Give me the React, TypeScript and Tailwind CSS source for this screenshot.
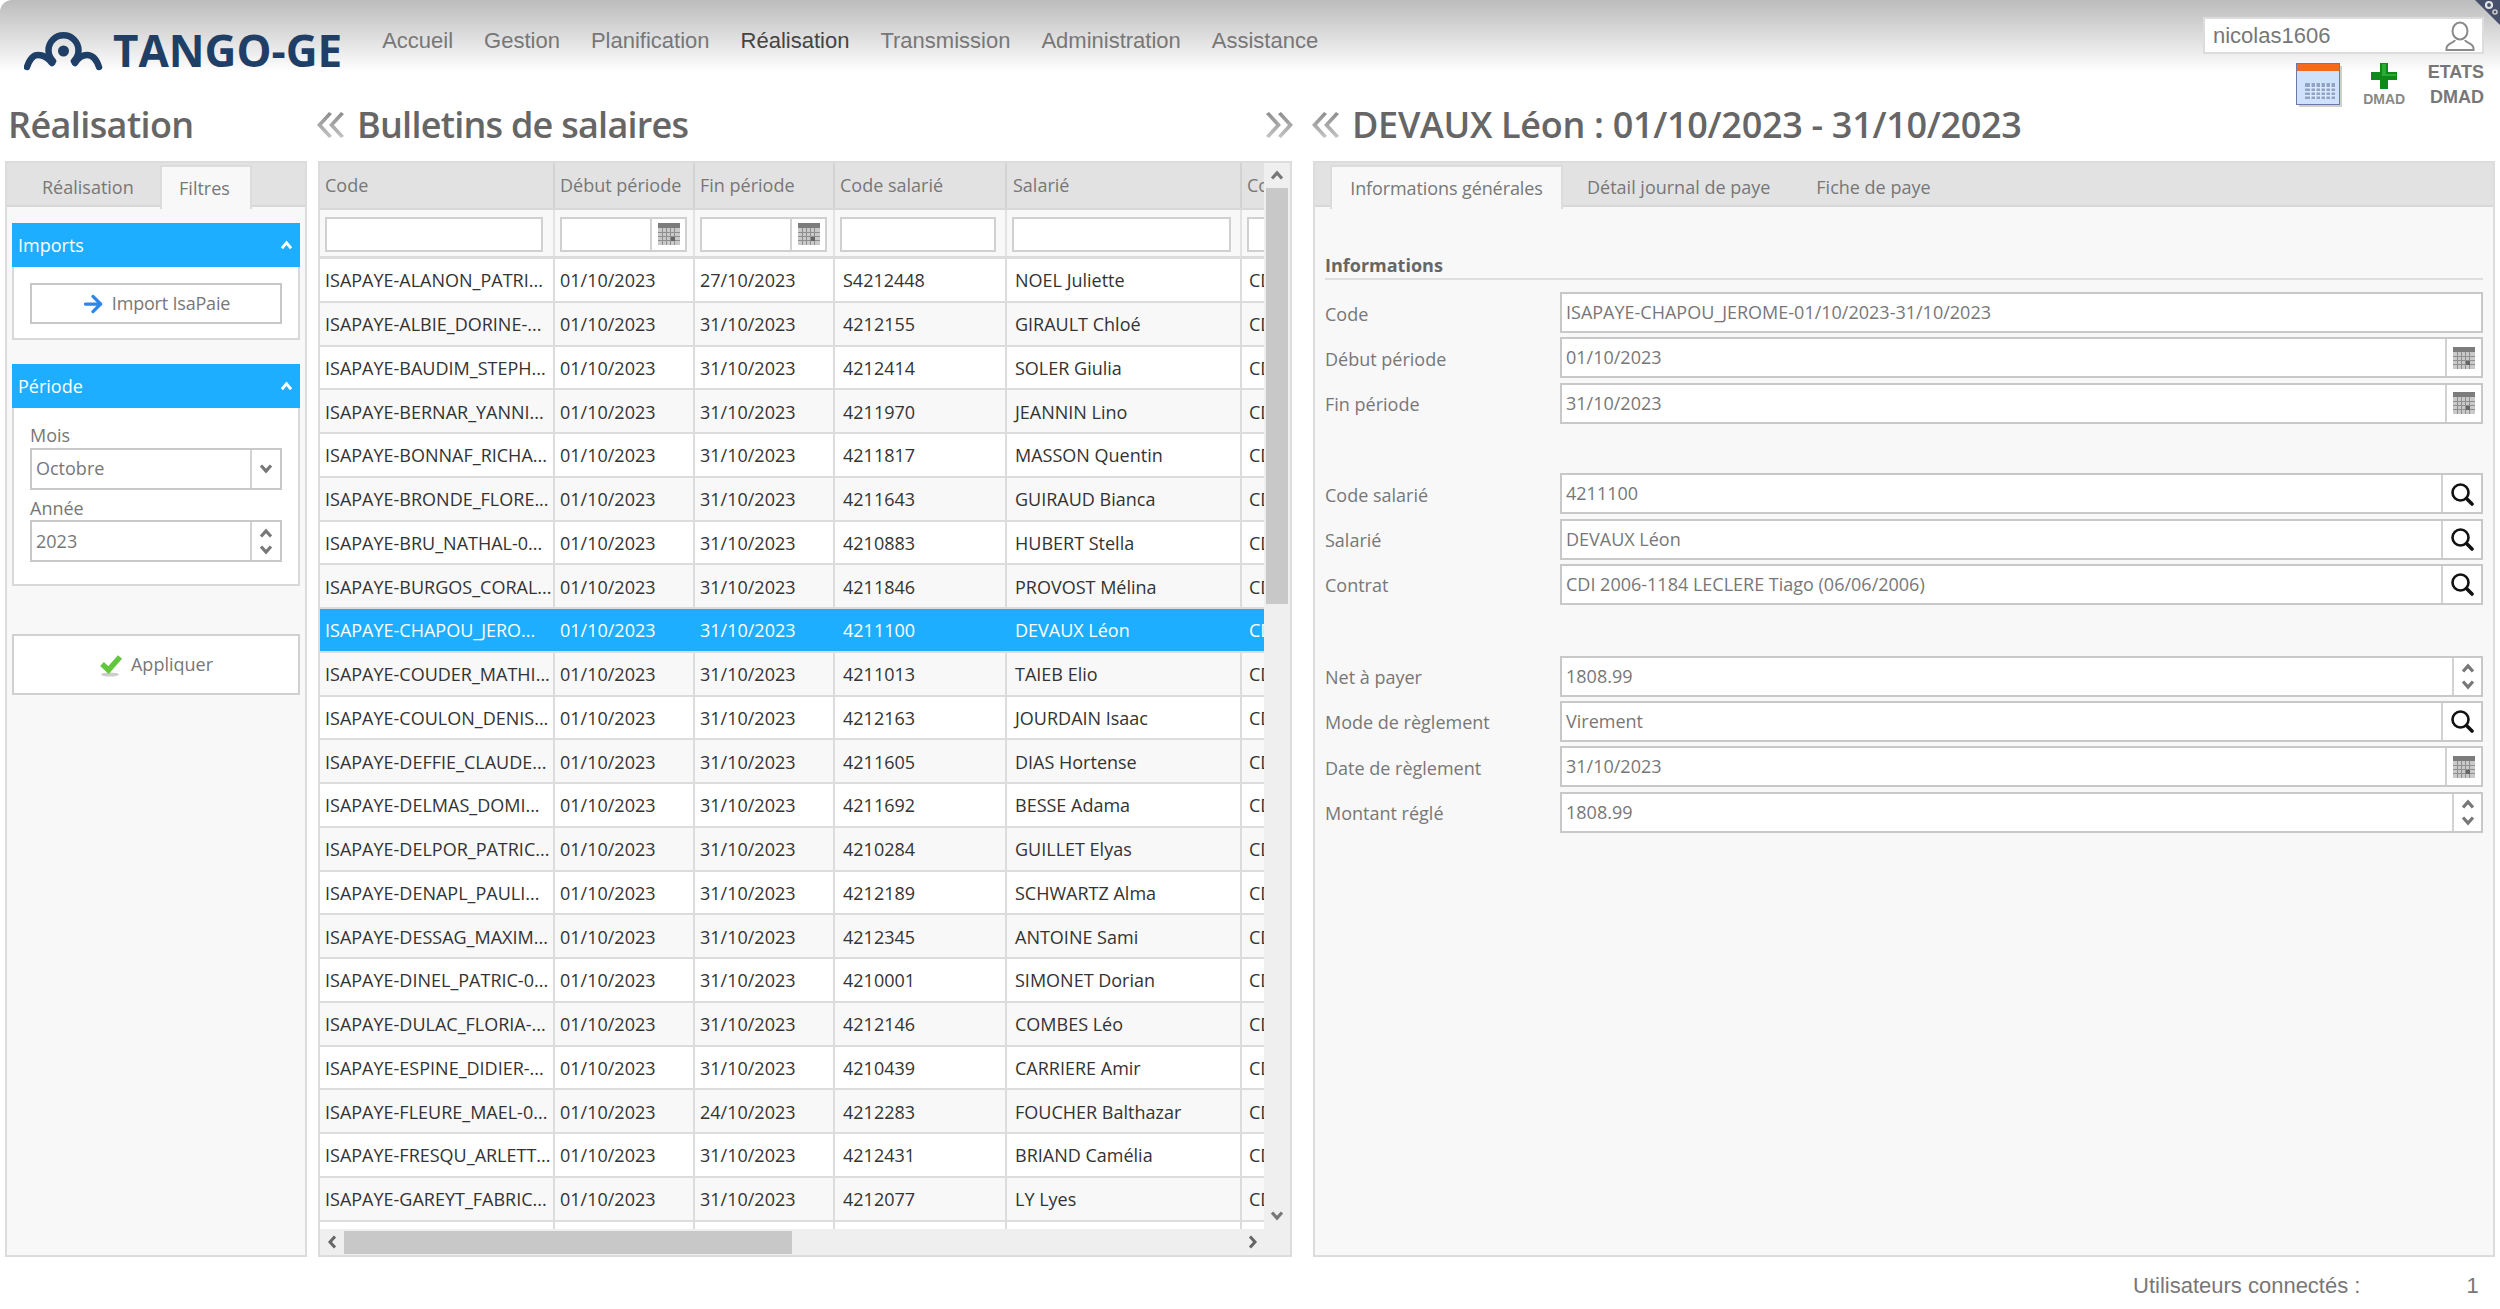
import { ArrowRight } from "lucide-react"

const rows = [
  ["ISAPAYE-ALANON_PATRI...", "01/10/2023", "27/10/2023", "S4212448", "NOEL Juliette"],
  ["ISAPAYE-ALBIE_DORINE-...", "01/10/2023", "31/10/2023", "4212155", "GIRAULT Chloé"],
  ["ISAPAYE-BAUDIM_STEPH...", "01/10/2023", "31/10/2023", "4212414", "SOLER Giulia"],
  ["ISAPAYE-BERNAR_YANNI...", "01/10/2023", "31/10/2023", "4211970", "JEANNIN Lino"],
  ["ISAPAYE-BONNAF_RICHA...", "01/10/2023", "31/10/2023", "4211817", "MASSON Quentin"],
  ["ISAPAYE-BRONDE_FLORE...", "01/10/2023", "31/10/2023", "4211643", "GUIRAUD Bianca"],
  ["ISAPAYE-BRU_NATHAL-0...", "01/10/2023", "31/10/2023", "4210883", "HUBERT Stella"],
  ["ISAPAYE-BURGOS_CORAL...", "01/10/2023", "31/10/2023", "4211846", "PROVOST Mélina"],
  ["ISAPAYE-CHAPOU_JERO...", "01/10/2023", "31/10/2023", "4211100", "DEVAUX Léon"],
  ["ISAPAYE-COUDER_MATHI...", "01/10/2023", "31/10/2023", "4211013", "TAIEB Elio"],
  ["ISAPAYE-COULON_DENIS...", "01/10/2023", "31/10/2023", "4212163", "JOURDAIN Isaac"],
  ["ISAPAYE-DEFFIE_CLAUDE...", "01/10/2023", "31/10/2023", "4211605", "DIAS Hortense"],
  ["ISAPAYE-DELMAS_DOMI...", "01/10/2023", "31/10/2023", "4211692", "BESSE Adama"],
  ["ISAPAYE-DELPOR_PATRIC...", "01/10/2023", "31/10/2023", "4210284", "GUILLET Elyas"],
  ["ISAPAYE-DENAPL_PAULI...", "01/10/2023", "31/10/2023", "4212189", "SCHWARTZ Alma"],
  ["ISAPAYE-DESSAG_MAXIM...", "01/10/2023", "31/10/2023", "4212345", "ANTOINE Sami"],
  ["ISAPAYE-DINEL_PATRIC-0...", "01/10/2023", "31/10/2023", "4210001", "SIMONET Dorian"],
  ["ISAPAYE-DULAC_FLORIA-...", "01/10/2023", "31/10/2023", "4212146", "COMBES Léo"],
  ["ISAPAYE-ESPINE_DIDIER-...", "01/10/2023", "31/10/2023", "4210439", "CARRIERE Amir"],
  ["ISAPAYE-FLEURE_MAEL-0...", "01/10/2023", "24/10/2023", "4212283", "FOUCHER Balthazar"],
  ["ISAPAYE-FRESQU_ARLETT...", "01/10/2023", "31/10/2023", "4212431", "BRIAND Camélia"],
  ["ISAPAYE-GAREYT_FABRIC...", "01/10/2023", "31/10/2023", "4212077", "LY Lyes"],
]

const navItems = ["Accueil", "Gestion", "Planification", "Réalisation", "Transmission", "Administration", "Assistance"]

function Chevron({ up, className }: { up?: boolean; className?: string }) {
  return (
    <svg viewBox="0 0 14 10" className={className ?? "w-[14px] h-[10px]"}>
      <path d={up ? "M2 8.5 L7 3 L12 8.5" : "M2 1.5 L7 7 L12 1.5"} fill="none" stroke="#777" strokeWidth="3.2" />
    </svg>
  )
}

function Chevrons({ right }: { right?: boolean }) {
  return (
    <svg viewBox="0 0 28 26" className="w-[28px] h-[26px] shrink-0">
      <defs>
        <linearGradient id={right ? "chev-r" : "chev-l"} x1="0" y1="0" x2="0" y2="1">
          <stop offset="0" stopColor="#8c8c8c" />
          <stop offset="1" stopColor="#c4c4c4" />
        </linearGradient>
      </defs>
      <g fill={`url(#${right ? "chev-r" : "chev-l"})`} transform={right ? "matrix(-1 0 0 1 28 0)" : undefined}>
        <path d="M12 0 L15 2 L5 13 L15 24 L12 26 L0 13 Z" />
        <path d="M24 0 L27 2 L17 13 L27 24 L24 26 L12 13 Z" />
      </g>
    </svg>
  )
}

function CalendarIcon() {
  return (
    <svg viewBox="0 0 22 22" className="w-[22px] h-[22px]">
      <rect x="0" y="0" width="22" height="22" fill="#c9c9c9" />
      <rect x="0" y="0" width="22" height="5" fill="#7c7c7c" />
      {[4, 8, 12, 16].map((x) => <rect key={x} x={x} y="5" width="1" height="17" fill="#8f8f8f" />)}
      {[9, 13, 17].map((y) => <rect key={y} x="0" y={y} width="22" height="1" fill="#8f8f8f" />)}
      <rect x="13" y="14" width="4" height="4" fill="#666" />
    </svg>
  )
}

function SearchIcon() {
  return (
    <svg viewBox="0 0 24 24" className="w-[24px] h-[24px]">
      <circle cx="10.5" cy="10.5" r="8" fill="none" stroke="#111" strokeWidth="2.6" />
      <path d="M16.5 16.5 L22 22" stroke="#111" strokeWidth="3.6" strokeLinecap="round" />
    </svg>
  )
}

function Spinner() {
  return (
    <div className="w-[29px] shrink-0 border-l-2 border-[#d2d2d2] flex flex-col items-center justify-center gap-[7px]">
      <Chevron up />
      <Chevron />
    </div>
  )
}

type Addon = "calendar" | "search" | "spinner" | undefined

function Field({ label, value, addon }: { label: string; value: string; addon?: Addon }) {
  return (
    <div className="flex h-[45.33px]">
      <div className="w-[235px] h-[41px] flex items-center pt-[3px] text-[18px] text-[#777]">{label}</div>
      <div className="flex-1 h-[41px] flex bg-white border-2 border-[#c8c8c8]">
        <div className="flex-1 flex items-center px-[4px] text-[18px] text-[#777]">{value}</div>
        {addon === "calendar" && (
          <div className="w-[36px] shrink-0 border-l-2 border-[#d2d2d2] flex items-center justify-center"><CalendarIcon /></div>
        )}
        {addon === "search" && (
          <div className="w-[40px] shrink-0 border-l-2 border-[#d2d2d2] flex items-center justify-center"><SearchIcon /></div>
        )}
        {addon === "spinner" && <Spinner />}
      </div>
    </div>
  )
}

function SectionHeader({ title }: { title: string }) {
  return (
    <div className="h-[44px] bg-[#1eaeff] flex items-center justify-between px-[6px] text-white text-[18px]">
      <span>{title}</span>
      <svg viewBox="0 0 14 12" className="w-[13px] h-[11px] mr-[1px]">
        <path d="M2 9 L7 3 L12 9" fill="none" stroke="#fff" strokeWidth="3" />
      </svg>
    </div>
  )
}

function DateFilter({ className }: { className: string }) {
  return (
    <div className={`${className} h-[35px] flex bg-white border-2 border-[#d0d0d0]`}>
      <div className="flex-1" />
      <div className="w-[35px] border-l-2 border-[#d2d2d2] flex items-center justify-center"><CalendarIcon /></div>
    </div>
  )
}

export default function App() {
  return (
    <div className="w-[2500px] h-[1309px] overflow-hidden bg-white font-['Open_Sans',sans-serif]">
      {/* top bar */}
      <header className="h-[72px] rounded-tl-[12px] bg-gradient-to-b from-[#bcbcbc] to-white flex items-start relative">
        <div className="ml-[24px] mt-[29px] flex items-start">
          <svg viewBox="0 0 82 44" className="w-[82px] h-[44px]">
            <g fill="none" stroke="#1f3f66" strokeLinecap="round" strokeWidth="6.5">
              <path d="M3 38 Q7 26 14 26 Q22 26 28 34" />
              <path d="M29 32 A15 15 0 1 1 50 32" />
              <path d="M51 34 Q56 26 63 26 Q71 26 75 38" />
            </g>
            <circle cx="39.5" cy="22" r="5.5" fill="#1f3f66" />
          </svg>
          <span className="ml-[7px] mt-[-4px] text-[44px] leading-[50px] font-bold text-[#1f3f66]">TANGO-GE</span>
        </div>
        <nav className="ml-[40px] mt-[28px] flex gap-[31px] font-['Liberation_Sans',sans-serif] text-[22px] leading-[26px] text-[#777]">
          {navItems.map((n) => (
            <span key={n} className={n === "Réalisation" ? "text-[#444]" : ""}>{n}</span>
          ))}
        </nav>
        <div className="ml-auto mr-[16px] mt-[17px] w-[281px] font-['Liberation_Sans',sans-serif]">
          <div className="h-[37px] bg-white border-2 border-[#dcdcdc] flex items-center justify-between pl-[8px] pr-[7px] text-[22px] text-[#777]">
            <span>nicolas1606</span>
            <svg viewBox="0 0 30 30" className="w-[30px] h-[30px]">
              <g fill="none" stroke="#8a8a8a" strokeWidth="2">
                <ellipse cx="15" cy="10" rx="7.5" ry="8.5" />
                <path d="M10 19 C9 22 2 22 1.5 27 L1.5 29 L28.5 29 L28.5 27 C28 22 21 22 20 19" />
              </g>
            </svg>
          </div>
          <div className="flex justify-end items-start mt-[9px]">
            <svg viewBox="0 0 46 44" className="w-[46px] h-[44px] mr-[20px]">
              <rect x="3" y="3" width="43" height="41" fill="#bbb" opacity="0.7" />
              <rect x="0.5" y="0.5" width="43" height="41" fill="#cfe2fb" stroke="#6c78a8" />
              <rect x="1" y="1" width="42" height="7" fill="#f26a1b" />
              <rect x="9" y="20" width="30" height="16" fill="#8fa3c4" />
              {[14, 19, 24, 29, 34].map((x) => <rect key={x} x={x} y="20" width="1.5" height="16" fill="#dce8fb" />)}
              {[24, 28, 32].map((y) => <rect key={y} x="9" y={y} width="30" height="1.5" fill="#dce8fb" />)}
            </svg>
            <div className="flex flex-col items-center w-[45px] mr-[21px]">
              <svg viewBox="0 0 26 26" className="w-[26px] h-[26px]">
                <path d="M9 0 H17 V9 H26 V17 H17 V26 H9 V17 H0 V9 H9 Z" fill="#0f8a1a" />
                <path d="M11 1 H15 V11 H25 V13 H11 Z" fill="#3cc24a" opacity="0.6" />
              </svg>
              <span className="text-[14px] leading-[14px] mt-[3px] font-bold text-[#888]">DMAD</span>
            </div>
            <div className="flex flex-col items-end text-[18px] leading-[25px] font-bold text-[#777] mt-[-3px]">
              <span>ETATS</span>
              <span>DMAD</span>
            </div>
          </div>
        </div>
        {/* settings corner */}
        <svg viewBox="0 0 25 25" className="absolute right-0 top-0 w-[25px] h-[25px]">
          <path d="M0 0 H25 V25 Z" fill="#46506a" />
          <circle cx="14" cy="5" r="3" fill="none" stroke="#e2e2e2" strokeWidth="2.2" />
          <circle cx="20" cy="12" r="2" fill="none" stroke="#c8c8c8" strokeWidth="1.6" />
        </svg>
      </header>

      {/* titles */}
      <div className="h-[89px] flex items-center pl-[8px] pt-[16px] text-[36px] font-semibold text-[#666]">
        <div className="w-[309px] tracking-[-0.6px]">Réalisation</div>
        <div className="w-[976px] mr-[19px] flex items-center">
          <Chevrons />
          <span className="ml-[12px] flex-1 tracking-[-0.75px]">Bulletins de salaires</span>
          <Chevrons right />
        </div>
        <Chevrons />
        <span className="ml-[12px] tracking-[-0.3px]">DEVAUX Léon : 01/10/2023 - 31/10/2023</span>
      </div>

      {/* main columns */}
      <main className="h-[1096px] flex pl-[5px] text-[18px] text-[#777]">
        {/* filters */}
        <section className="w-[302px] border-2 border-[#dcdcdc] bg-[#f8f8f8] flex flex-col">
          <div className="h-[44px] bg-[#e2e2e2] border-b-2 border-[#d8d8d8] flex items-end pl-[21px]">
            <div className="w-[132px] h-[36px] flex items-center justify-start pl-[14px] pt-[1px]">Réalisation</div>
            <div className="w-[92px] h-[44px] bg-[#f8f8f8] border-2 border-b-0 border-[#dcdcdc] -mb-[4px] flex items-center justify-center pr-[3px] relative">Filtres</div>
          </div>
          <div className="px-[5px] pt-[16px]">
            <SectionHeader title="Imports" />
            <div className="h-[73px] bg-white border-2 border-t-0 border-[#d8d8d8] px-[16px] pt-[16px]">
              <div className="h-[41px] border-2 border-[#c8c8c8] flex items-center justify-center gap-[6px] pr-[2px]">
                <ArrowRight className="w-[26px] h-[26px] text-[#2e86e8]" strokeWidth={3} />
                <span className="tracking-[-0.2px]">Import IsaPaie</span>
              </div>
            </div>
            <div className="h-[24px]" />
            <SectionHeader title="Période" />
            <div className="h-[178px] bg-white border-2 border-t-0 border-[#d8d8d8] px-[16px] pt-[16px]">
              <div className="h-[24px] leading-[22px]">Mois</div>
              <div className="h-[42px] flex border-2 border-[#c8c8c8]">
                <div className="flex-1 flex items-center px-[4px] pb-[2px]">Octobre</div>
                <div className="w-[30px] border-l-2 border-[#d2d2d2] flex items-center justify-center"><Chevron /></div>
              </div>
              <div className="h-[30px] pt-[6px] leading-[24px]">Année</div>
              <div className="h-[42px] flex border-2 border-[#c8c8c8]">
                <div className="flex-1 flex items-center px-[4px]">2023</div>
                <div className="w-[30px] border-l-2 border-[#d2d2d2] flex flex-col items-center justify-center gap-[7px]"><Chevron up /><Chevron /></div>
              </div>
            </div>
            <div className="mt-[48px] h-[61px] bg-white border-2 border-[#d0d0d0] flex items-center justify-center gap-[8px]">
              <svg viewBox="0 0 24 24" className="w-[24px] h-[24px]">
                <ellipse cx="11" cy="21.5" rx="9" ry="2" fill="#ccc" />
                <path d="M3 11 L9.5 17 L21 4" fill="none" stroke="#62c63c" strokeWidth="5.5" />
              </svg>
              <span>Appliquer</span>
            </div>
          </div>
        </section>

        {/* grid */}
        <section className="ml-[11px] w-[974px] border-2 border-[#dcdcdc] flex">
          <div className="w-[944px] flex flex-col">
            <div className="h-[47px] shrink-0 bg-[#e2e2e2] border-b-2 border-[#d8d8d8] flex">
              <div className="w-[235px] border-r-2 border-[#d2d2d2] pl-[5px] flex items-center">Code</div>
              <div className="w-[140px] border-r-2 border-[#d2d2d2] pl-[5px] flex items-center">Début période</div>
              <div className="w-[140px] border-r-2 border-[#d2d2d2] pl-[5px] flex items-center">Fin période</div>
              <div className="w-[172px] border-r-2 border-[#d2d2d2] pl-[5px] flex items-center">Code salarié</div>
              <div className="w-[235px] border-r-2 border-[#d2d2d2] pl-[6px] flex items-center">Salarié</div>
              <div className="flex-1 min-w-0 overflow-hidden pl-[5px] flex items-center">Code</div>
            </div>
            <div className="h-[49px] shrink-0 bg-[#f8f8f8] border-b-[3px] border-[#dcdcdc] flex items-center">
              <div className="w-[235px] h-full border-r-2 border-[#e2e2e2] flex items-center pl-[5px] pt-[2px]">
                <div className="w-[218px] h-[35px] bg-white border-2 border-[#d0d0d0]" />
              </div>
              <div className="w-[140px] h-full border-r-2 border-[#e2e2e2] flex items-center pl-[5px] pt-[2px]"><DateFilter className="w-[127px]" /></div>
              <div className="w-[140px] h-full border-r-2 border-[#e2e2e2] flex items-center pl-[5px] pt-[2px]"><DateFilter className="w-[127px]" /></div>
              <div className="w-[172px] h-full border-r-2 border-[#e2e2e2] flex items-center pl-[5px] pt-[2px]">
                <div className="w-[156px] h-[35px] bg-white border-2 border-[#d0d0d0]" />
              </div>
              <div className="w-[235px] h-full border-r-2 border-[#e2e2e2] flex items-center pl-[5px] pt-[2px]">
                <div className="w-[219px] h-[35px] bg-white border-2 border-[#d0d0d0]" />
              </div>
              <div className="flex-1 min-w-0 overflow-hidden pl-[5px] pt-[2px]">
                <div className="w-[60px] h-[35px] bg-white border-2 border-[#d0d0d0]" />
              </div>
            </div>
            <div className="flex-1 min-h-0 overflow-hidden">
              {rows.map((r, i) => {
                const selected = i === 8
                const sep = selected ? "border-transparent" : "border-[#dcdcdc]"
                return (
                  <div
                    key={r[0]}
                    className={`h-[43.75px] flex border-b-2 border-[#dcdcdc] ${selected ? "bg-[#1eaeff] text-white" : `text-[#333] ${i % 2 ? "bg-[#f8f8f8]" : "bg-white"}`}`}
                  >
                    <div className={`w-[235px] border-r-2 ${sep} pl-[5px] pt-[2px] flex items-center whitespace-nowrap overflow-hidden`}>{r[0]}</div>
                    <div className={`w-[140px] border-r-2 ${sep} pl-[5px] pt-[2px] flex items-center`}>{r[1]}</div>
                    <div className={`w-[140px] border-r-2 ${sep} pl-[5px] pt-[2px] flex items-center`}>{r[2]}</div>
                    <div className={`w-[172px] border-r-2 ${sep} pl-[8px] pt-[2px] flex items-center`}>{r[3]}</div>
                    <div className={`w-[235px] border-r-2 ${sep} pl-[8px] pt-[2px] flex items-center`}>{r[4]}</div>
                    <div className="flex-1 min-w-0 overflow-hidden pl-[7px] pt-[2px] flex items-center">CDI</div>
                  </div>
                )
              })}
              <div className="h-[43.75px] flex bg-white">
                <div className="w-[235px] border-r-2 border-[#dcdcdc]" />
                <div className="w-[140px] border-r-2 border-[#dcdcdc]" />
                <div className="w-[140px] border-r-2 border-[#dcdcdc]" />
                <div className="w-[172px] border-r-2 border-[#dcdcdc]" />
                <div className="w-[235px] border-r-2 border-[#dcdcdc]" />
              </div>
            </div>
            <div className="h-[26px] shrink-0 bg-[#efefef] flex items-center">
              <div className="w-[24px] flex justify-center">
                <svg viewBox="0 0 10 14" className="w-[10px] h-[14px]"><path d="M8 1.5 L3 7 L8 12.5" fill="none" stroke="#666" strokeWidth="3" /></svg>
              </div>
              <div className="w-[448px] h-[23px] bg-[#c8c8c8]" />
              <div className="flex-1 flex justify-end pr-[6px]">
                <svg viewBox="0 0 10 14" className="w-[10px] h-[14px]"><path d="M2 1.5 L7 7 L2 12.5" fill="none" stroke="#666" strokeWidth="3" /></svg>
              </div>
            </div>
          </div>
          <div className="flex-1 bg-[#efefef] flex flex-col items-center">
            <div className="h-[25px] flex items-center pb-[2px]"><Chevron up /></div>
            <div className="w-[22px] h-[416px] bg-[#c8c8c8]" />
            <div className="mt-auto h-[44px] flex items-start"><Chevron /></div>
          </div>
        </section>

        {/* detail */}
        <section className="ml-[21px] w-[1182px] border-2 border-[#dcdcdc] bg-[#f8f8f8] flex flex-col">
          <div className="h-[44px] shrink-0 bg-[#e2e2e2] border-b-2 border-[#d8d8d8] flex items-end pl-[15px]">
            <div className="w-[233px] h-[44px] bg-[#f8f8f8] border-2 border-b-0 border-[#dcdcdc] -mb-[4px] flex items-center justify-center tracking-[-0.1px] pt-[1px]">Informations générales</div>
            <div className="ml-[24px] h-[36px] flex items-center pt-[1px]">Détail journal de paye</div>
            <div className="ml-[46px] h-[36px] flex items-center pt-[1px]">Fiche de paye</div>
          </div>
          <div className="pl-[10px] pr-[10px] pt-[46px]">
            <div className="h-[27px] border-b-2 border-[#dedede] font-bold text-[#666] leading-[24px]">Informations</div>
            <div className="mt-[12px]">
              <Field label="Code" value="ISAPAYE-CHAPOU_JEROME-01/10/2023-31/10/2023" />
              <Field label="Début période" value="01/10/2023" addon="calendar" />
              <Field label="Fin période" value="31/10/2023" addon="calendar" />
              <div className="h-[45.33px]" />
              <Field label="Code salarié" value="4211100" addon="search" />
              <Field label="Salarié" value="DEVAUX Léon" addon="search" />
              <Field label="Contrat" value="CDI 2006-1184 LECLERE Tiago (06/06/2006)" addon="search" />
              <div className="h-[46.33px]" />
              <Field label="Net à payer" value="1808.99" addon="spinner" />
              <Field label="Mode de règlement" value="Virement" addon="search" />
              <Field label="Date de règlement" value="31/10/2023" addon="calendar" />
              <Field label="Montant réglé" value="1808.99" addon="spinner" />
            </div>
          </div>
        </section>
      </main>

      {/* footer */}
      <footer className="h-[52px] flex items-center pt-[4px] font-['Liberation_Sans',sans-serif] text-[22px] text-[#777]">
        <span className="ml-[2133px]">Utilisateurs connectés :</span>
        <span className="ml-[106px]">1</span>
      </footer>
    </div>
  )
}
